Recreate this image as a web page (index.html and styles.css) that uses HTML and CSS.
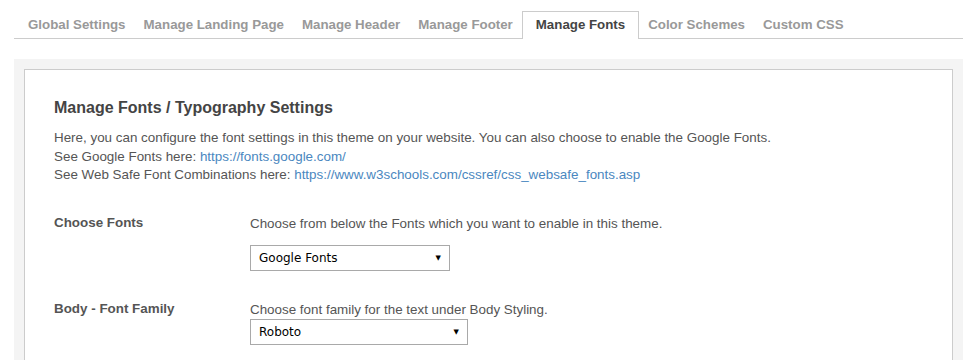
FILE: index.html
```html
<!DOCTYPE html>
<html lang="en">
<head>
    <meta charset="UTF-8">
    <title>Manage Fonts</title>
    <link rel="stylesheet" href="styles.css">
</head>
<body>
    <ul class="tabs">
        <li class="tab">Global Settings</li>
        <li class="tab">Manage Landing Page</li>
        <li class="tab">Manage Header</li>
        <li class="tab">Manage Footer</li>
        <li class="tab active">Manage Fonts</li>
        <li class="tab">Color Schemes</li>
        <li class="tab">Custom CSS</li>
    </ul>

    <div class="wrap">
        <div class="panel">
            <h2>Manage Fonts / Typography Settings</h2>
            <p class="intro">
                Here, you can configure the font settings in this theme on your website. You can also choose to enable the Google Fonts.<br>
                See Google Fonts here: <a href="#">https://fonts.google.com/</a><br>
                See Web Safe Font Combinations here: <a href="#">https://www.w3schools.com/cssref/css_websafe_fonts.asp</a>
            </p>

            <div class="row">
                <div class="label">Choose Fonts</div>
                <div class="field">
                    <div class="hint spaced">Choose from below the Fonts which you want to enable in this theme.</div>
                    <div class="select select-fonts">
                        <span>Google Fonts</span>
                        <span class="arrow">&#9660;</span>
                    </div>
                </div>
            </div>

            <div class="row">
                <div class="label">Body - Font Family</div>
                <div class="field">
                    <div class="hint">Choose font family for the text under Body Styling.</div>
                    <div class="select select-family">
                        <span>Roboto</span>
                        <span class="arrow">&#9660;</span>
                    </div>
                </div>
            </div>
        </div>
    </div>
</body>
</html>
```

FILE: styles.css
```css
body {
    font-family: 'Liberation Sans', Arial, sans-serif;
    margin: 0;
    padding: 11px 13px 0 14px;
    background-color: #ffffff;
    color: #555;
}
.tabs {
    display: flex;
    list-style: none;
    margin: 0;
    padding: 0;
    border-bottom: 1px solid #cccccc;
}
.tab {
    font-size: 13.3px;
    font-weight: bold;
    color: #999;
    line-height: 15px;
    padding: 5px 8px 7px;
    border: 1px solid transparent;
    border-bottom: none;
    margin-bottom: -1px;
}
.tab:first-child {
    padding-left: 13px;
}
.tab.active {
    background-color: #ffffff;
    border-color: #cccccc;
    color: #444;
    padding: 5px 13px 7px;
}
.wrap {
    margin-top: 20px;
    background-color: #f4f4f4;
    padding: 10px 10px 0 10px;
}
.panel {
    background-color: #ffffff;
    border: 1px solid #cccccc;
    border-bottom: none;
    padding: 28px 29px 20px;
}
h2 {
    font-size: 16px;
    color: #444;
    margin: 0 0 11px;
    line-height: 20px;
}
.intro {
    font-size: 13.4px;
    line-height: 18.5px;
    margin: 0 0 30px;
    color: #555;
}
.intro a {
    color: #4a87c0;
    text-decoration: none;
}
.row {
    display: flex;
    margin-bottom: 30px;
}
.label {
    width: 196px;
    font-size: 13.4px;
    font-weight: bold;
    color: #555;
    line-height: 16px;
}
.field {
    font-size: 13.4px;
}
.hint {
    line-height: 18px;
}
.hint.spaced {
    margin-bottom: 12px;
}
.select {
    display: flex;
    justify-content: space-between;
    align-items: center;
    height: 24px;
    border: 1px solid #a9a9a9;
    padding: 0 8px;
    font-family: 'DejaVu Sans', Verdana, sans-serif;
    font-size: 12px;
    color: #000;
    box-sizing: content-box;
}
.select-fonts {
    width: 182px;
}
.select-family {
    width: 200px;
}
.arrow {
    font-size: 7px;
    margin-right: 0;
}
```
